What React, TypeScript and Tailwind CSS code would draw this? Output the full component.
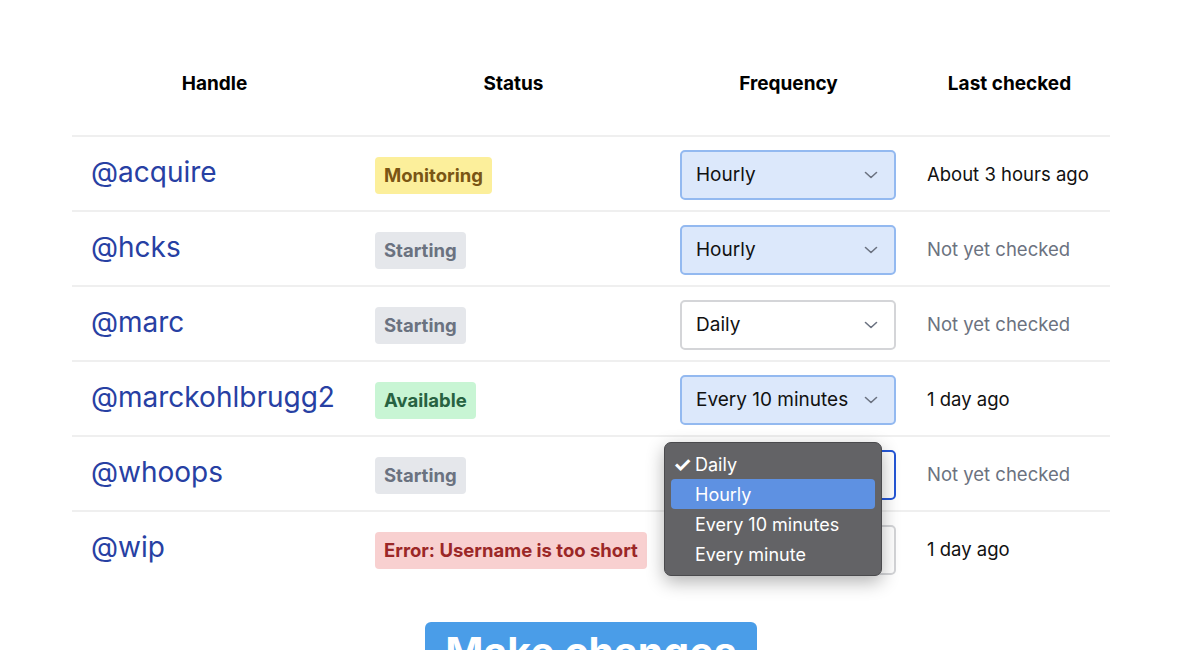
import React from 'react';

type Row = {
  handle: string;
  status: 'Monitoring' | 'Starting' | 'Available' | 'Error';
  statusText: string;
  freq: string;
  changed: boolean;
  focused?: boolean;
  last: string;
  checked: boolean;
};

const ROWS: Row[] = [
  { handle: '@acquire', status: 'Monitoring', statusText: 'Monitoring', freq: 'Hourly', changed: true, last: 'About 3 hours ago', checked: true },
  { handle: '@hcks', status: 'Starting', statusText: 'Starting', freq: 'Hourly', changed: true, last: 'Not yet checked', checked: false },
  { handle: '@marc', status: 'Starting', statusText: 'Starting', freq: 'Daily', changed: false, last: 'Not yet checked', checked: false },
  { handle: '@marckohlbrugg2', status: 'Available', statusText: 'Available', freq: 'Every 10 minutes', changed: true, last: '1 day ago', checked: true },
  { handle: '@whoops', status: 'Starting', statusText: 'Starting', freq: 'Daily', changed: false, focused: true, last: 'Not yet checked', checked: false },
  { handle: '@wip', status: 'Error', statusText: 'Error: Username is too short', freq: 'Daily', changed: false, last: '1 day ago', checked: true },
];

const BADGE: Record<Row['status'], string> = {
  Monitoring: 'bg-[#fcef9b] text-[#7a5514]',
  Starting: 'bg-[#e5e7eb] text-[#6b7280]',
  Available: 'bg-[#c8f5d4] text-[#276241]',
  Error: 'bg-[#f8d0d0] text-[#9b2727]',
};

function Chevron() {
  return (
    <svg width="14" height="8" viewBox="0 0 14 8" fill="none" className="shrink-0">
      <path d="M1.5 1.5 7 6.5l5.5-5" stroke="#6b7280" strokeWidth="1.6" strokeLinecap="round" strokeLinejoin="round" />
    </svg>
  );
}

function FreqSelect({ row }: { row: Row }) {
  const tone = row.focused
    ? 'border-[#2557d6] bg-white'
    : row.changed
      ? 'border-[#93b9f0] bg-[#dce8fb]'
      : 'border-[#d4d5d8] bg-white';
  return (
    <div className={`flex h-[50px] w-[216px] items-center justify-between rounded-[5px] border-2 pl-[14px] pr-[16px] ${tone}`}>
      <span className="text-[19px] text-[#111]">{row.freq}</span>
      <Chevron />
    </div>
  );
}

function Menu() {
  const items = ['Daily', 'Hourly', 'Every 10 minutes', 'Every minute'];
  return (
    <div className="absolute left-[-16px] top-[-8px] z-10 w-[218px] rounded-[7px] border border-[#4a4a4d] bg-[#636366] px-[6px] py-[6px] shadow-[0_6px_18px_rgba(0,0,0,0.3)]">
      {items.map((it, i) => (
        <div
          key={it}
          className={`relative flex h-[30px] items-center rounded-[4px] pl-[24px] text-[18px] text-white ${i === 1 ? 'bg-[#5e91e2]' : ''}`}
        >
          {i === 0 && <span className="absolute left-[2px] text-[21px] font-bold leading-none">✓</span>}
          {it}
        </div>
      ))}
    </div>
  );
}

export default function App() {
  return (
    <div className="min-h-screen bg-white font-['Inter',sans-serif] text-black">
      <div className="ml-[72px] w-[1038px]">
        <div className="grid h-[135px] grid-cols-[285px_305px_247px_201px] items-start pt-[70px] text-[19px] font-bold">
          <div className="text-center leading-7">Handle</div>
          <div className="pl-[8px] text-center leading-7">Status</div>
          <div className="pl-[6px] text-center leading-7">Frequency</div>
          <div className="text-center leading-7">Last checked</div>
        </div>
        {ROWS.map((row) => (
          <div
            key={row.handle}
            className="grid h-[75px] grid-cols-[285px_305px_247px_201px] items-center border-t-2 border-[#efefef] pt-[3px]"
          >
            <div className="-mt-[7px] pl-[19px] text-[28px] leading-none text-[#2740a3]">{row.handle}</div>
            <div className="pl-[18px]">
              <span className={`inline-block rounded-[4px] px-[9px] py-[6px] text-[18.5px] font-bold leading-[25px] ${BADGE[row.status]}`}>
                {row.statusText}
              </span>
            </div>
            <div className="relative pl-[18px]">
              <FreqSelect row={row} />
              {row.focused && (
                <div className="absolute left-[18px] top-0">
                  <Menu />
                </div>
              )}
            </div>
            <div className={`pl-[18px] text-[18.5px] ${row.checked ? 'text-[#111]' : 'text-[#6b7280]'}`}>{row.last}</div>
          </div>
        ))}
        <div className="flex justify-center pt-[37px]">
          <button className="flex h-[80px] w-[332px] items-start justify-center whitespace-nowrap rounded-[6px] bg-[#4a9de8] pt-[10px] text-[41px] font-bold leading-[41px] text-white">
            Make changes
          </button>
        </div>
      </div>
    </div>
  );
}
